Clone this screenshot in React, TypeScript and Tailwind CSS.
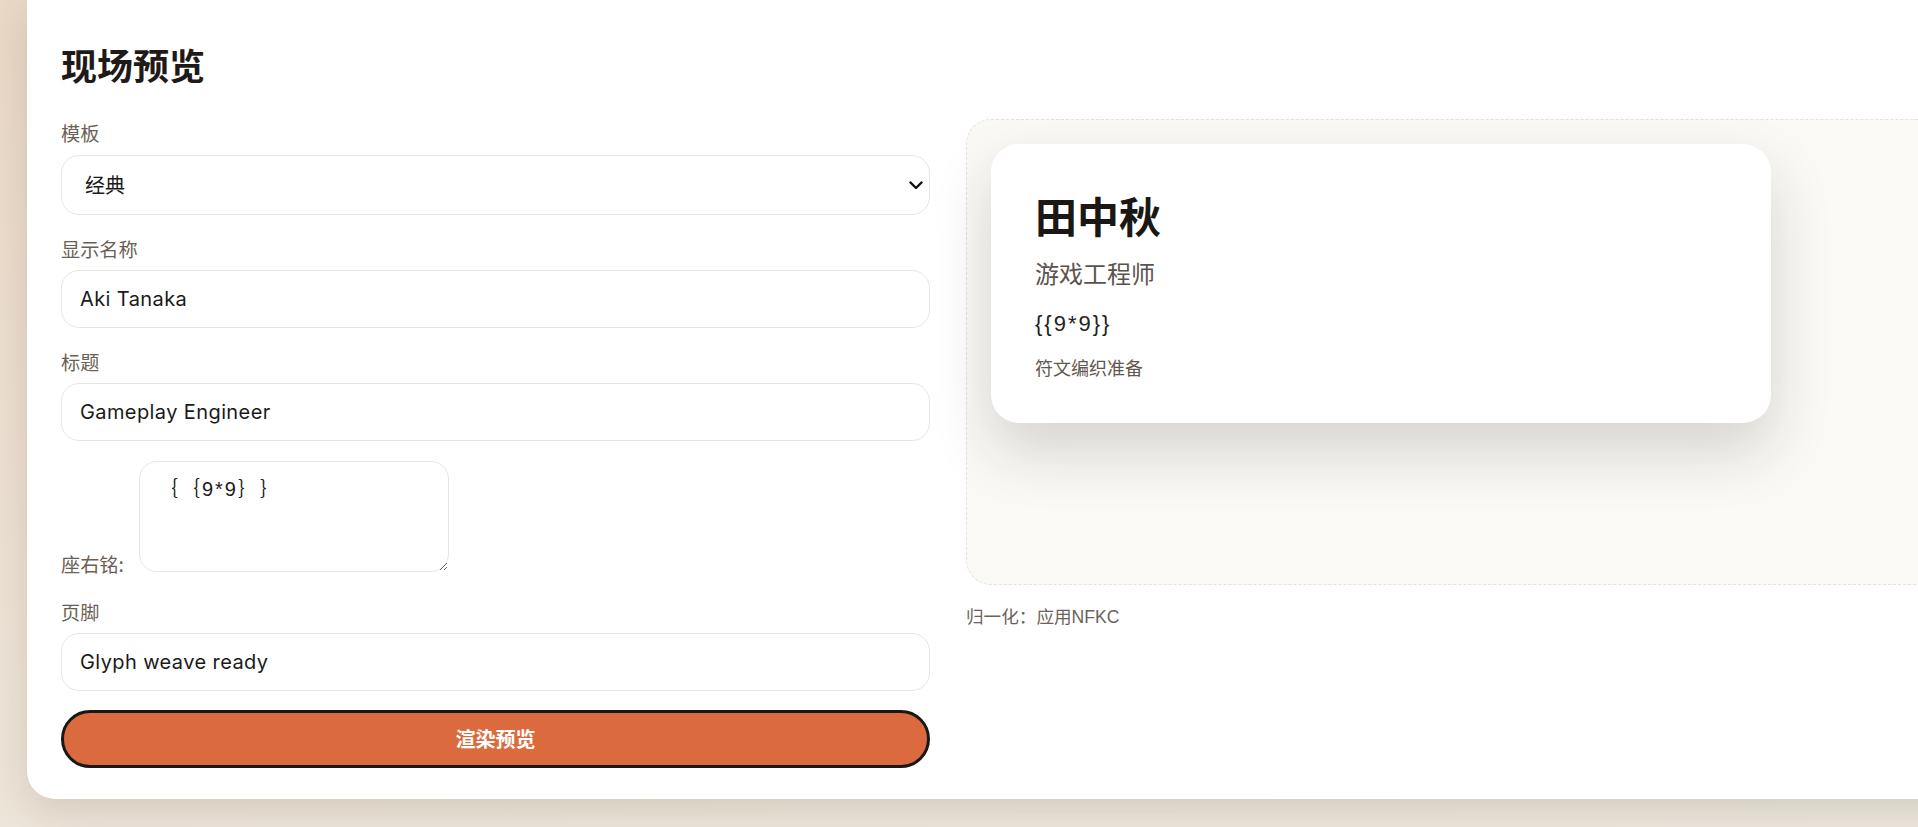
import React from "react";

const cjk = '"Noto Sans CJK SC", "Noto Sans", sans-serif';
const inputFont = 'Inter, "Noto Sans CJK SC", sans-serif';
const arialCjk = '"Liberation Sans", "Noto Sans CJK SC", sans-serif';

function Label({ children }: { children: React.ReactNode }) {
  return (
    <div className="block text-[19.2px] leading-[28px] text-[#6b5f55]" style={{ fontFamily: cjk }}>
      {children}
    </div>
  );
}

function TextInput({ value }: { value: string }) {
  return (
    <input
      readOnly
      value={value}
      className="mt-[7px] block h-[58px] w-full rounded-[18px] border border-[#e8e6e2] bg-white px-[18px] text-[20px] tracking-[0.02em] text-[#1a1a1a] outline-none"
      style={{ fontFamily: inputFont }}
    />
  );
}

export default function App() {
  return (
    <div className="h-screen w-screen overflow-hidden bg-[linear-gradient(170deg,#ebd9c7_0%,#eee4d8_60%,#efe9df_100%)]">
      <div className="pl-[27px]">
        <div className="w-[2000px] rounded-b-[28px] bg-white pb-[31px] pl-[34px] pt-[42px] shadow-[0_12px_40px_rgba(70,50,30,0.16)]">
          <h1 className="mb-[33px] text-[36px] font-bold leading-[44px] text-[#1f1a17]" style={{ fontFamily: cjk }}>
            现场预览
          </h1>
          <div className="grid grid-cols-[869px_1000px] gap-x-[36px]">
            <div className="flex flex-col gap-[20px]">
              <div>
                <Label>模板</Label>
                <div className="relative mt-[8px]">
                  <select
                    className="block h-[60px] w-full appearance-none rounded-[18px] border border-[#e8e6e2] bg-white pl-[23px] text-[20px] text-[#1a1a1a] outline-none"
                    style={{ fontFamily: cjk }}
                    defaultValue="classic"
                  >
                    <option value="classic">经典</option>
                  </select>
                  <svg
                    className="pointer-events-none absolute right-[7px] top-[26px] h-[9px] w-[14px]"
                    viewBox="0 0 14 9"
                    fill="none"
                  >
                    <path d="M1.5 1.5 L7 7 L12.5 1.5" stroke="#111" strokeWidth="2.4" strokeLinecap="round" strokeLinejoin="round" />
                  </svg>
                </div>
              </div>
              <div>
                <Label>显示名称</Label>
                <TextInput value="Aki Tanaka" />
              </div>
              <div>
                <Label>标题</Label>
                <TextInput value="Gameplay Engineer" />
              </div>
              <label className="block text-[19.2px] leading-[28px] text-[#6b5f55]" style={{ fontFamily: cjk }}>
                座右铭:
                <textarea
                  readOnly
                  value="｛｛9*9｝｝"
                  className="ml-[15px] h-[111px] w-[310px] rounded-[18px] border border-[#e8e6e2] bg-white px-[18px] py-[12px] align-baseline text-[20px] leading-[30px] tracking-[2px] text-[#1a1a1a] outline-none [text-spacing-trim:space-all]"
                  style={{ fontFamily: arialCjk }}
                />
              </label>
              <div>
                <Label>页脚</Label>
                <TextInput value="Glyph weave ready" />
              </div>
              <button
                className="-mt-[1px] h-[58px] w-full rounded-full border-[3px] border-[#1a1816] bg-[#db6b3e] text-[20px] font-bold text-white"
                style={{ fontFamily: cjk }}
              >
                渲染预览
              </button>
            </div>
            <div>
              <div className="h-[466px] rounded-[25px] border border-dashed border-[#e4e1db] bg-[#faf9f6] pl-[24px] pt-[24px]">
                <div
                  className="w-[780px] rounded-[28px] bg-white pb-[40px] pl-[44px] pt-[46px] shadow-[0_28px_60px_rgba(40,30,20,0.17)]"
                  style={{ fontFamily: arialCjk }}
                >
                  <div className="text-[42px] font-bold leading-[50px] text-[#1a1714]" style={{ fontFamily: cjk }}>
                    田中秋
                  </div>
                  <div className="mt-[17px] text-[24px] leading-[36px] text-[#5a534d]">游戏工程师</div>
                  <div className="mt-[14px] text-[22px] leading-[33px] tracking-[2px] text-[#222]">{"{{9*9}}"}</div>
                  <div className="mt-[16px] text-[18px] leading-[27px] text-[#5f5850]">符文编织准备</div>
                </div>
              </div>
              <div className="mt-[19px] text-[17.6px] leading-[26px] text-[#6b635a]" style={{ fontFamily: arialCjk }}>
                归一化：应用NFKC
              </div>
            </div>
          </div>
        </div>
      </div>
    </div>
  );
}
